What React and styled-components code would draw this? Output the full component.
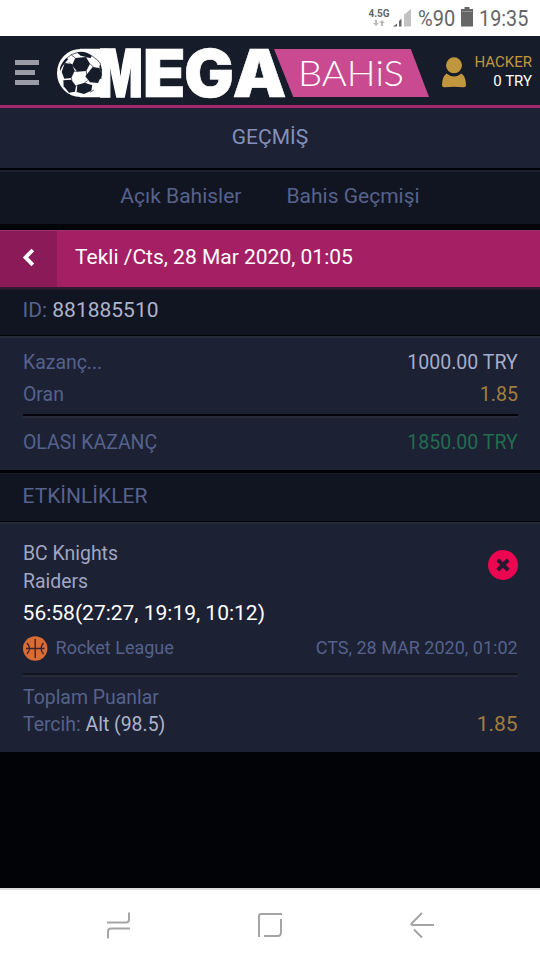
import React from "react";
import styled, { createGlobalStyle } from "styled-components";

const Global = createGlobalStyle`
  * { box-sizing: border-box; }
  body { margin: 0; background: #020307; font-family: Roboto, sans-serif; }
`;

const Screen = styled.div`
  width: 540px;
  height: 960px;
  display: flex;
  flex-direction: column;
  background: #020307;
  overflow: hidden;
`;

const Text = styled.span`
  display: inline-block;
  white-space: pre;
  font-size: ${(p) => p.$size || 21}px;
  font-weight: ${(p) => p.$weight || 400};
  color: ${(p) => p.$color || "#56628c"};
  transform: scaleX(${(p) => p.$narrow || 1});
  transform-origin: ${(p) => p.$origin || "left"} center;
`;

const StatusBar = styled.div`
  height: 36px;
  flex: none;
  background: #fff;
  display: flex;
  justify-content: flex-end;
  align-items: center;
  padding: 2px 12px 0 0;
`;

const Network = styled.div`
  display: flex;
  flex-direction: column;
  align-items: center;
  width: 22px;
  height: 20px;
  font-size: 10px;
  line-height: 10px;
  font-weight: 700;
  color: #666;
  margin: 0 3px 0 0;
`;

const Arrows = styled.svg`
  margin-top: 1px;
`;

const Battery = styled.svg`
  flex: none;
  margin-top: -4px;
`;

const Signal = styled.svg`
  flex: none;
  margin-top: -2px;
`;

const Clock = styled.div`
  width: ${(p) => p.$w}px;
  margin-left: ${(p) => p.$gap}px;
  line-height: 34px;
`;

const Header = styled.header`
  height: 72px;
  flex: none;
  display: flex;
  align-items: center;
  background: #171c2b;
  border-bottom: 3px solid #a1296c;
  padding: 0 8px 0 15px;
`;

const Menu = styled.div`
  display: flex;
  flex-direction: column;
  gap: 5px;
  width: 24px;
  margin: 4px 18px 0 0;
`;

const MenuBar = styled.div`
  height: 5px;
  width: ${(p) => p.$w}px;
  background: #9a9ba6;
`;

const LogoArt = styled.svg`
  flex: none;
  margin-top: 5px;
  overflow: visible;
`;

const Account = styled.div`
  flex: 1;
  text-align: right;
  font-size: 15px;
  line-height: 19px;
  padding-top: 2px;
`;

const AccountLine = styled.div`
  color: ${(p) => p.$color};
`;

const UserIcon = styled.svg`
  flex: none;
  margin: 4px 0 0 12px;
`;

const TitleBar = styled.div`
  height: 62px;
  flex: none;
  border-bottom: 2px solid #03040a;
  background: #1c2133;
  text-align: center;
  line-height: 58px;
`;

const Tabs = styled.nav`
  height: 60px;
  flex: none;
  display: flex;
  justify-content: center;
  gap: 45px;
  background: #111522;
  border-top: 2px solid #1d202b;
  border-bottom: 6px solid #03040a;
  line-height: 49px;
`;

const CouponBar = styled.div`
  height: 59px;
  flex: none;
  display: flex;
  line-height: 52px;
  background: #a51f65;
  border-top: 1px solid #9c3069;
  border-bottom: 2px solid #321732;
`;

const Back = styled.div`
  width: 57px;
  background: #8b1b58;
  margin-right: 18px;
  padding: 17px 0 0 21.5px;
  line-height: 0;
`;

const SectionBar = styled.div`
  height: ${(p) => p.$h}px;
  flex: none;
  background: #111522;
  border-top: 1px solid #1b1e29;
  border-bottom: 1px solid #03040a;
  padding-left: 22.5px;
  line-height: ${(p) => p.$line}px;
`;

const Panel = styled.section`
  height: ${(p) => p.$h}px;
  flex: none;
  background: #1c2133;
  border-top: 2px solid #262b38;
  padding: ${(p) => p.$top}px 22.4px 0 22.6px;
`;

const Gap = styled.div`
  height: 3px;
  flex: none;
  background: #020307;
`;

const Row = styled.div`
  display: flex;
  align-items: center;
  justify-content: space-between;
  height: ${(p) => p.$h}px;
  line-height: ${(p) => p.$h}px;
`;

const Divider = styled.div`
  height: 4px;
  margin-top: ${(p) => p.$gap}px;
  border-top: 2px solid ${(p) => p.$color};
  border-bottom: 2px solid #272b39;
`;

const Teams = styled.div`
  display: flex;
  flex-direction: column;
  line-height: 28px;
`;

const LostIcon = styled.svg`
  margin-top: -4px;
`;

const League = styled.div`
  display: flex;
  align-items: center;
  gap: 8px;
`;

const NavBar = styled.footer`
  height: 72px;
  flex: none;
  margin-top: auto;
  background: #fff;
  border-top: 2px solid #dedee0;
  display: flex;
  align-items: center;
  padding-left: 106px;
`;

const NavIcon = styled.svg`
  flex: none;
  margin-right: ${(p) => p.$gap}px;
`;

const Logo = () => (
  <LogoArt width="373" height="50" viewBox="57 48 373 50">
    <path d="M80 48.8H108V97.2H80Z" fill="#fff" />
    <g fill="#fff" stroke="#fff" strokeWidth=".6" fontFamily="Inter, sans-serif" fontWeight="900" fontSize="66">
      <text x="98.5" y="97" textLength="44" lengthAdjust="spacingAndGlyphs" strokeWidth="1.6">M</text>
      <text x="142.7" y="97" textLength="43" lengthAdjust="spacingAndGlyphs">E</text>
      <text x="184" y="97" textLength="50" lengthAdjust="spacingAndGlyphs">G</text>
      <text x="232.5" y="97" textLength="54" lengthAdjust="spacingAndGlyphs">A</text>
    </g>
    <path d="M274 49H410.8L429 97H293.3Z" fill="#c94a91" />
    <text x="298" y="86" fontFamily="Lato, sans-serif" fontWeight="300" fontSize="34.5" fill="#fff" textLength="106" lengthAdjust="spacingAndGlyphs">BAHiS</text>
    <g transform="translate(0 36) scale(.3333)">
      <ellipse cx="241" cy="111" rx="70" ry="72" fill="#fff" />
      <g fill="#171c2b">
        <path d="M226 66L258 63L270 83L259 105L232 107L216 88Z" />
        <path d="M194 81L216 84L224 104L214 126L193 128L185 108Z" />
        <path d="M278 93L298 96L306 116L294 141L270 139L256 121Z" />
        <path d="M190 133L214 131L228 150L225 167L207 170L191 151Z" />
        <path d="M232 147L254 140L277 148L274 164L252 174L230 168Z" />
        <path d="M230 49Q254 42 276 59L272 66L242 59Z" />
        <path d="M200 66L205 69L188 90L180 105L180 95Q187 76 200 66Z" />
        <path d="M301 82L306 101L304 130L299 127L302 109L298 93Z" />
      </g>
      <path
        d="M226 66L213 56M258 63L272 63M270 83L280 93M259 105L261 120M232 107L219 104M216 88L207 79M214 126L216 134M228 150L236 147M254 140L263 134M197 69L214 56L232 50M275 59L292 72L302 84M270 169L282 162"
        fill="none"
        stroke="#171c2b"
        strokeWidth="2"
      />
    </g>
  </LogoArt>
);

export default function App() {
  return (
    <Screen>
      <Global />
      <StatusBar>
        <Network>
          4.5G
          <Arrows width="12" height="7" viewBox="0 0 12 7" fill="#bbb">
            <path d="M2 0H4V3H6L3 6L0 3H2ZM8 6H10V3H12L9 0L6 3H8Z" />
          </Arrows>
        </Network>
        <Signal width="18" height="18" viewBox="0 0 18 18">
          <path d="M0 17.5L4 14.5V17.5ZM6 17.5V12L8.5 9.5V17.5Z" fill="#666" />
          <path d="M11 17.5V5.5L18 0V17.5Z" fill="#c2c2c2" />
        </Signal>
        <Clock $w={43} $gap={7}>
          <Text $size={22.5} $color="#666" $narrow={0.89}>%90</Text>
        </Clock>
        <Battery width="12" height="20" viewBox="0 0 12 20">
          <path d="M3.5 0H8.5V2H12V19.5H0V2H3.5Z" fill="#666" />
          <path d="M1 4.5H11" stroke="#aaa" strokeWidth=".7" />
        </Battery>
        <Clock $w={49} $gap={6}>
          <Text $size={22.5} $color="#666" $narrow={0.88}>19:35</Text>
        </Clock>
      </StatusBar>

      <Header>
        <Menu>
          <MenuBar $w={24} />
          <MenuBar $w={20} />
          <MenuBar $w={24} />
        </Menu>
        <Logo />
        <UserIcon width="24" height="31" viewBox="0 0 24 31" fill="#c1973d">
          <circle cx="12" cy="8.3" r="8" />
          <path d="M4.5 16.5Q12 22.5 19.5 16.5Q24 20 24 28Q24 30.5 21.5 30.3Q12 29 2.5 30.3Q0 30.5 0 28Q0 20 4.5 16.5Z" />
        </UserIcon>
        <Account>
          <AccountLine $color="#c1973d">HACKER</AccountLine>
          <AccountLine $color="#fff">0 TRY</AccountLine>
        </Account>
      </Header>

      <TitleBar>
        <Text $color="#8490bb">GEÇMİŞ</Text>
      </TitleBar>
      <Tabs>
        <Text>Açık Bahisler</Text>
        <Text>Bahis Geçmişi</Text>
      </Tabs>

      <CouponBar>
        <Back>
          <svg width="13" height="20" viewBox="0 0 13 20">
            <path d="M10.8 2L3.5 9.4L10.8 16.8" fill="none" stroke="#fff" strokeWidth="3.8" />
          </svg>
        </Back>
        <Text $color="#fff">Tekli /Cts, 28 Mar 2020, 01:05</Text>
      </CouponBar>

      <SectionBar $h={47} $line={41}>
        <Text>ID: </Text>
        <Text $color="#adb3ca">881885510</Text>
      </SectionBar>

      <Panel $h={134} $top={8}>
        <Row $h={33}>
          <Text $narrow={0.925}>Kazanç...</Text>
          <Text $narrow={0.93} $origin="right" $color="#a6acc9">1000.00 TRY</Text>
        </Row>
        <Row $h={31}>
          <Text $narrow={0.925}>Oran</Text>
          <Text $narrow={0.93} $origin="right" $color="#a17e3f">1.85</Text>
        </Row>
        <Divider $gap={4} $color="#03040a" />
        <Row $h={48}>
          <Text $narrow={0.925}>OLASI KAZANÇ</Text>
          <Text $narrow={0.93} $origin="right" $color="#236c50">1850.00 TRY</Text>
        </Row>
      </Panel>
      <Gap />

      <SectionBar $h={49} $line={44}>
        <Text>ETKİNLİKLER</Text>
      </SectionBar>

      <Panel $h={230} $top={15}>
        <Row $h={56}>
          <Teams>
            <Text $narrow={0.925} $color="#a0a6c4">BC Knights</Text>
            <Text $narrow={0.925} $color="#a0a6c4">Raiders</Text>
          </Teams>
          <LostIcon width="30" height="30" viewBox="0 0 30 30">
            <circle cx="15" cy="15" r="15" fill="#ec0550" />
            <path d="M9.8 9.8L20.2 20.2M20.2 9.8L9.8 20.2" stroke="#2a1730" strokeWidth="4" />
          </LostIcon>
        </Row>
        <Row $h={36}>
          <Text $color="#fff">56:58(27:27, 19:19, 10:12)</Text>
        </Row>
        <Row $h={34}>
          <League>
            <svg width="25" height="25" viewBox="0 0 25 25">
              <circle cx="12.2" cy="12.5" r="12.2" fill="#d96b35" />
              <path d="M12.2 3V22M3 12.5H21.5M4 7Q9 12.5 4 18M20.5 7Q15.5 12.5 20.5 18" fill="none" stroke="#3a2430" strokeWidth="1.4" />
            </svg>
            <Text $size={18}>Rocket League</Text>
          </League>
          <Text $size={18}>CTS, 28 MAR 2020, 01:02</Text>
        </Row>
        <Divider $gap={8} $color="#111522" />
        <Row $h={41}>
          <Text $narrow={0.925}>Toplam Puanlar</Text>
        </Row>
        <Row $h={13}>
          <Text $narrow={0.925}>
            Tercih: <Text $color="#adb3ca">Alt (98.5)</Text>
          </Text>
          <Text $color="#a17e3f">1.85</Text>
        </Row>
      </Panel>

      <NavBar>
        <NavIcon $gap={127} width="25" height="27" viewBox="0 0 25 27" fill="none" stroke="#a5a5a5" strokeWidth="2">
          <path d="M1 10.5H20Q23 10.5 23 7.5V.5M24 16.5H5Q2 16.5 2 19.5V26.5" />
        </NavIcon>
        <NavIcon $gap={127} width="25" height="26" viewBox="0 0 25 26" fill="none" stroke="#a5a5a5" strokeWidth="2">
          <path d="M1 25V4Q1 2 3.5 2H24M23 7V20Q23 24 20 24H6" />
        </NavIcon>
        <NavIcon $gap={0} width="24" height="27" viewBox="0 0 24 27" fill="none" stroke="#a5a5a5" strokeWidth="2">
          <path d="M12 1L1.5 11.5Q1 13 2.5 13H24M4 17.5L12 25.5" />
        </NavIcon>
      </NavBar>
    </Screen>
  );
}
